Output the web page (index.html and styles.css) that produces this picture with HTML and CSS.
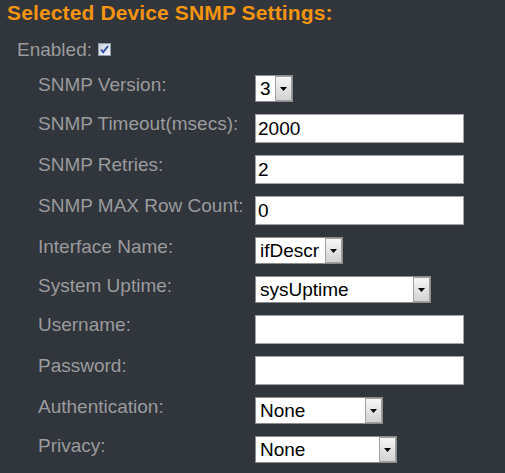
FILE: index.html
```html
<!DOCTYPE html>
<html>
<head>
<meta charset="utf-8">
<link rel="stylesheet" href="styles.css">
</head>
<body>
<div class="panel">
  <h1 class="title">Selected Device SNMP Settings:</h1>
  <div class="enabled">
    <span class="enabled-label">Enabled:</span>
    <span class="checkbox">
      <svg width="13" height="13" viewBox="0 0 13 13">
        <defs>
          <linearGradient id="cbg" x1="0" y1="0" x2="1" y2="1">
            <stop offset="0" stop-color="#c9d0dc"/>
            <stop offset="1" stop-color="#f4f5f8"/>
          </linearGradient>
        </defs>
        <rect x="0.5" y="0.5" width="12" height="12" fill="url(#cbg)" stroke="#8e9bb0"/>
        <path d="M3 6.5 L5.2 9.2 L10 3" fill="none" stroke="#2a47a8" stroke-width="1.8"/>
      </svg>
    </span>
  </div>
  <div class="form">
    <label class="label">SNMP Version:</label>
    <div class="select w-ver"><span class="value">3</span><span class="btn"><svg width="7" height="4" viewBox="0 0 7 4"><path d="M0 0H7L3.5 4Z" fill="#000"/></svg></span></div>

    <label class="label">SNMP Timeout(msecs):</label>
    <div class="input">2000</div>

    <label class="label">SNMP Retries:</label>
    <div class="input">2</div>

    <label class="label">SNMP MAX Row Count:</label>
    <div class="input">0</div>

    <label class="label">Interface Name:</label>
    <div class="select w-if"><span class="value">ifDescr</span><span class="btn"><svg width="7" height="4" viewBox="0 0 7 4"><path d="M0 0H7L3.5 4Z" fill="#000"/></svg></span></div>

    <label class="label">System Uptime:</label>
    <div class="select w-up"><span class="value">sysUptime</span><span class="btn"><svg width="7" height="4" viewBox="0 0 7 4"><path d="M0 0H7L3.5 4Z" fill="#000"/></svg></span></div>

    <label class="label">Username:</label>
    <div class="input"></div>

    <label class="label">Password:</label>
    <div class="input"></div>

    <label class="label">Authentication:</label>
    <div class="select w-auth"><span class="value">None</span><span class="btn"><svg width="7" height="4" viewBox="0 0 7 4"><path d="M0 0H7L3.5 4Z" fill="#000"/></svg></span></div>

    <label class="label">Privacy:</label>
    <div class="select w-priv"><span class="value">None</span><span class="btn"><svg width="7" height="4" viewBox="0 0 7 4"><path d="M0 0H7L3.5 4Z" fill="#000"/></svg></span></div>
  </div>
</div>
</body>
</html>
```
FILE: styles.css
```css
html, body {
  margin: 0;
  padding: 0;
  background: #31353c;
}
body {
  font-family: "Liberation Sans", Arial, sans-serif;
  width: 505px;
  height: 473px;
  overflow: hidden;
}
.panel {
  padding: 1px 0 0 7px;
}
.title {
  margin: 0;
  font-size: 21px;
  line-height: 24px;
  font-weight: bold;
  letter-spacing: 0.13px;
  color: #f5940f;
}
.enabled {
  display: flex;
  align-items: center;
  margin: 14px 0 0 10px;
  height: 22px;
}
.enabled-label {
  font-size: 19px;
  line-height: 22px;
  color: #9a9b9d;
}
.checkbox {
  display: flex;
  margin-left: 6px;
  margin-top: -2px;
}
.form {
  display: grid;
  grid-template-columns: 217px auto;
  row-gap: 12px;
  margin: 14px 0 0 31px;
  align-items: start;
  justify-items: start;
}
.label {
  font-size: 19px;
  line-height: 20px;
  color: #9a9b9d;
  white-space: nowrap;
}
.input {
  box-sizing: border-box;
  width: 209px;
  height: 29px;
  background: #fff;
  border: 1px solid #a3a3a3;
  padding: 0 2px;
  font-size: 19px;
  line-height: 27px;
  color: #000;
}
.select {
  box-sizing: border-box;
  height: 27px;
  display: flex;
  background: #fff;
  border: 1px solid #8c8c8c;
  font-size: 19px;
  line-height: 25px;
  color: #000;
}
.select .value {
  flex: 1;
  padding-left: 4px;
  white-space: nowrap;
  overflow: hidden;
}
.select .btn {
  box-sizing: border-box;
  width: 17px;
  height: 25px;
  border: 1px solid #a0a0a0;
  background: linear-gradient(#f6f6f6, #d2d2d2);
  display: flex;
  align-items: center;
  justify-content: center;
}
.select .btn svg {
  display: block;
}
.w-ver { width: 38px; }
.w-if { width: 88px; }
.w-up { width: 176px; }
.w-auth { width: 128px; }
.w-priv { width: 142px; }
```
